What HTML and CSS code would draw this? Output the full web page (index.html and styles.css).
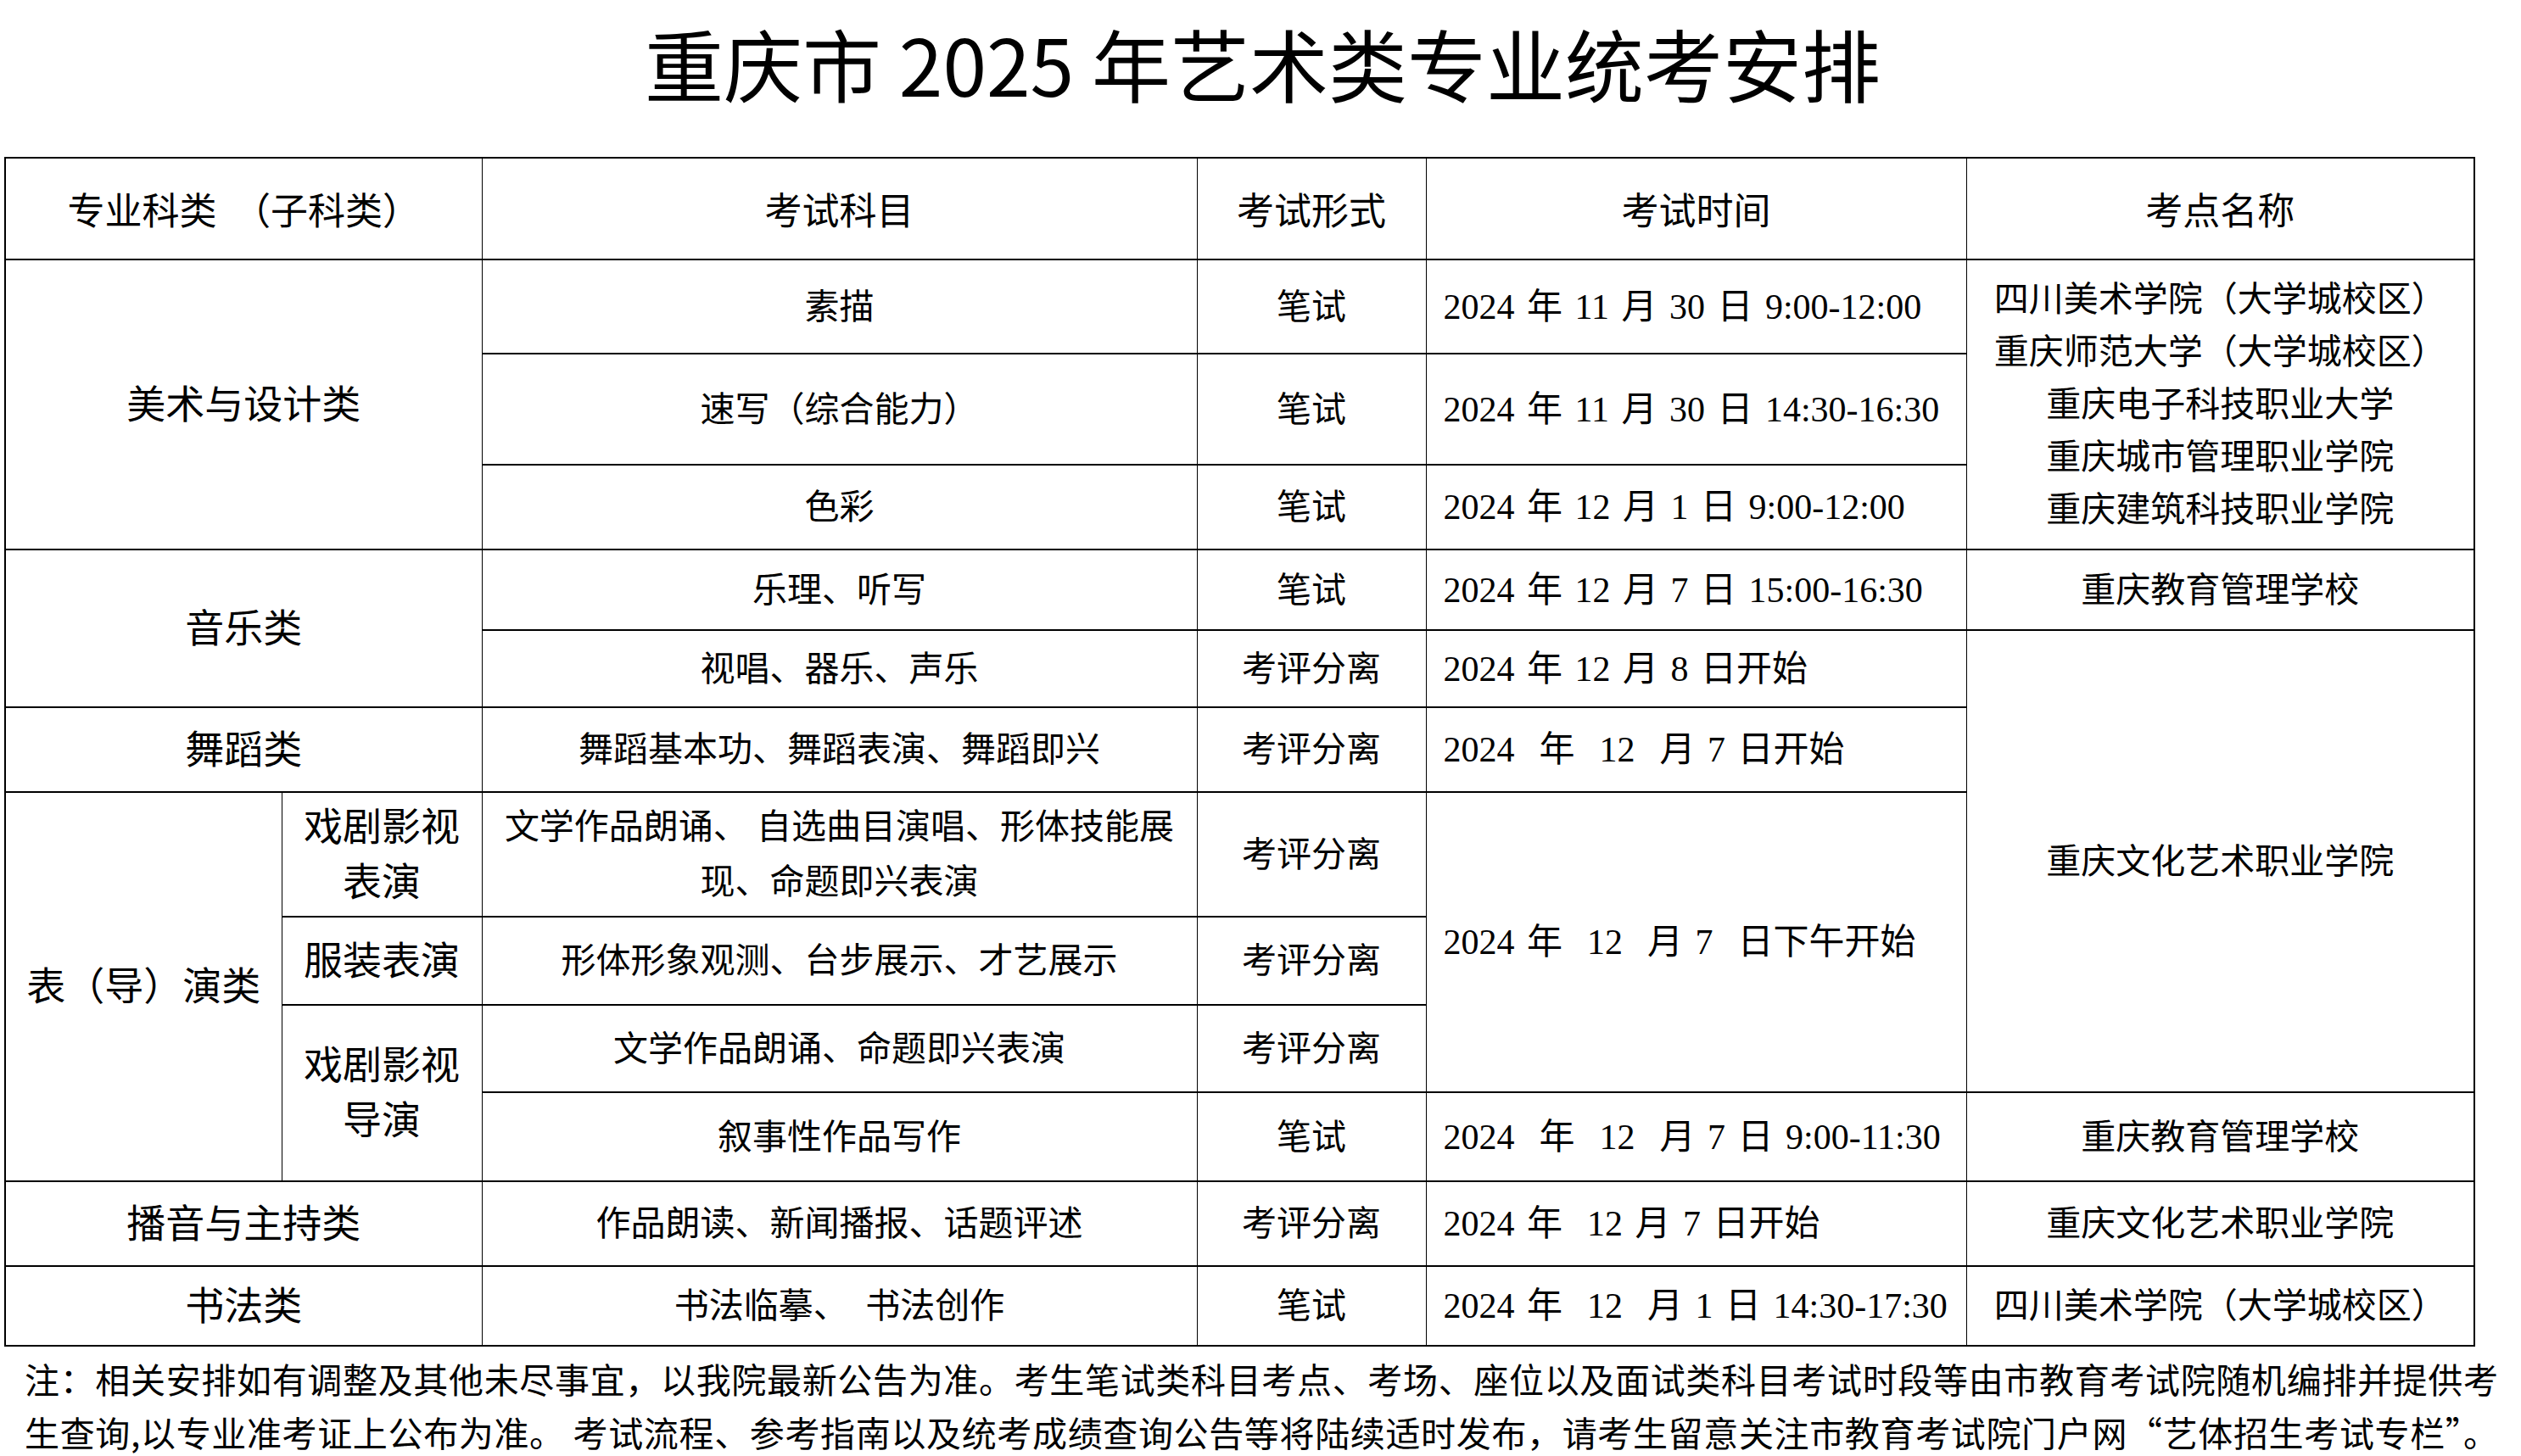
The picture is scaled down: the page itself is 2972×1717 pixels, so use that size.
FILE: index.html
```html
<!DOCTYPE html>
<html lang="zh-CN">
<head>
<meta charset="utf-8">
<title>重庆市 2025 年艺术类专业统考安排</title>
<link rel="stylesheet" href="styles.css">
</head>
<body>
<div class="page">
  <h1 class="title">重庆市 2025 年艺术类专业统考安排</h1>
  <table class="schedule">
    <colgroup>
      <col class="c-a"><col class="c-b"><col class="c-c"><col class="c-d"><col class="c-e"><col class="c-f">
    </colgroup>
    <thead>
      <tr class="row-head">
        <th colspan="2">专业科类 &nbsp;（子科类）</th>
        <th>考试科目</th>
        <th>考试形式</th>
        <th>考试时间</th>
        <th>考点名称</th>
      </tr>
    </thead>
    <tbody>
      <tr class="r1">
        <td colspan="2" rowspan="3" class="cat">美术与设计类</td>
        <td>素描</td>
        <td>笔试</td>
        <td class="time">2024 年 11 月 30 日 9:00-12:00</td>
        <td rowspan="3" class="site">四川美术学院（大学城校区）<br>重庆师范大学（大学城校区）<br>重庆电子科技职业大学<br>重庆城市管理职业学院<br>重庆建筑科技职业学院</td>
      </tr>
      <tr class="r2">
        <td>速写（综合能力）</td>
        <td>笔试</td>
        <td class="time">2024 年 11 月 30 日 14:30-16:30</td>
      </tr>
      <tr class="r3">
        <td>色彩</td>
        <td>笔试</td>
        <td class="time">2024 年 12 月 1 日 9:00-12:00</td>
      </tr>
      <tr class="r4">
        <td colspan="2" rowspan="2" class="cat">音乐类</td>
        <td>乐理、听写</td>
        <td>笔试</td>
        <td class="time">2024 年 12 月 7 日 15:00-16:30</td>
        <td class="site">重庆教育管理学校</td>
      </tr>
      <tr class="r5">
        <td>视唱、器乐、声乐</td>
        <td>考评分离</td>
        <td class="time">2024 年 12 月 8 日开始</td>
        <td rowspan="5" class="site">重庆文化艺术职业学院</td>
      </tr>
      <tr class="r6">
        <td colspan="2" class="cat">舞蹈类</td>
        <td>舞蹈基本功、舞蹈表演、舞蹈即兴</td>
        <td>考评分离</td>
        <td class="time">2024&nbsp; 年&nbsp; 12&nbsp; 月 7 日开始</td>
      </tr>
      <tr class="r7">
        <td rowspan="4" class="cat">表（导）演类</td>
        <td class="cat sub">戏剧影视<br>表演</td>
        <td class="wrap">文学作品朗诵、 自选曲目演唱、形体技能展<br>现、命题即兴表演</td>
        <td>考评分离</td>
        <td rowspan="3" class="time">2024 年&nbsp; 12&nbsp; 月 7&nbsp; 日下午开始</td>
      </tr>
      <tr class="r8">
        <td class="cat sub">服装表演</td>
        <td>形体形象观测、台步展示、才艺展示</td>
        <td>考评分离</td>
      </tr>
      <tr class="r9">
        <td rowspan="2" class="cat sub">戏剧影视<br>导演</td>
        <td>文学作品朗诵、命题即兴表演</td>
        <td>考评分离</td>
      </tr>
      <tr class="r10">
        <td>叙事性作品写作</td>
        <td>笔试</td>
        <td class="time">2024&nbsp; 年&nbsp; 12&nbsp; 月 7 日 9:00-11:30</td>
        <td class="site">重庆教育管理学校</td>
      </tr>
      <tr class="r11">
        <td colspan="2" class="cat">播音与主持类</td>
        <td>作品朗读、新闻播报、话题评述</td>
        <td>考评分离</td>
        <td class="time">2024 年&nbsp; 12 月 7 日开始</td>
        <td class="site">重庆文化艺术职业学院</td>
      </tr>
      <tr class="r12">
        <td colspan="2" class="cat">书法类</td>
        <td>书法临摹、&nbsp; 书法创作</td>
        <td>笔试</td>
        <td class="time">2024 年&nbsp; 12&nbsp; 月 1 日 14:30-17:30</td>
        <td class="site">四川美术学院（大学城校区）</td>
      </tr>
    </tbody>
  </table>
  <p class="note">
    <span class="note-line">注：相关安排如有调整及其他未尽事宜，以我院最新公告为准。考生笔试类科目考点、考场、座位以及面试类科目考试时段等由市教育考试院随机编排并提供考</span>
    <span class="note-line">生查询,以专业准考证上公布为准。 考试流程、参考指南以及统考成绩查询公告等将陆续适时发布，请考生留意关注市教育考试院门户网“艺体招生考试专栏”。</span>
  </p>
</div>
</body>
</html>
```

FILE: styles.css
```css
html, body {
  margin: 0;
  padding: 0;
  background: #ffffff;
  color: #000000;
}

.page {
  width: 2972px;
  padding-left: 5px;
  box-sizing: border-box;
}

.title {
  margin: 0;
  height: 185px;
  box-sizing: border-box;
  padding-top: 27px;
  font-family: "Noto Sans CJK SC", sans-serif;
  font-size: 93px;
  line-height: 94px;
  font-weight: 400;
  text-align: center;
}

.schedule {
  border-collapse: collapse;
  table-layout: fixed;
  width: 2912px;
  border: 2px solid #000;
}

.c-a { width: 326px; }
.c-b { width: 236px; }
.c-c { width: 843px; }
.c-d { width: 270px; }
.c-e { width: 637px; }
.c-f { width: 599px; }

.schedule th,
.schedule td {
  border-top: 2px solid #000;
  border-bottom: 2px solid #000;
  border-left: 1px solid #000;
  border-right: 1px solid #000;
  padding: 0 4px;
  text-align: center;
  vertical-align: middle;
  font-family: "Liberation Serif", "Noto Sans CJK SC", serif;
  font-size: 41px;
  line-height: 62px;
  font-weight: 400;
  white-space: nowrap;
}

.schedule th {
  font-family: "Noto Sans CJK SC", sans-serif;
  font-size: 44px;
  font-weight: 400;
}

.row-head { height: 120px; }
.r1 { height: 111px; }
.r2 { height: 131px; }
.r3 { height: 100px; }
.r4 { height: 95px; }
.r5 { height: 91px; }
.r6 { height: 100px; }
.r7 { height: 147px; }
.r8 { height: 104px; }
.r9 { height: 103px; }
.r10 { height: 105px; }
.r11 { height: 100px; }
.r12 { height: 94px; }

.schedule td.cat {
  font-size: 46px;
  line-height: 65px;
}

.schedule td.sub {
  padding: 0 2px;
}

.schedule td.wrap {
  line-height: 65px;
}

.schedule td.time {
  text-align: left;
  padding-left: 20px;
  font-size: 42px;
  word-spacing: 4px;
}

.schedule td.site {
  line-height: 62px;
}

.note {
  margin: 6px 0 0 24px;
  width: 2916px;
  font-family: "Noto Sans CJK SC", sans-serif;
  font-size: 41px;
  line-height: 63px;
}

.note-line {
  display: block;
  text-align: justify;
  text-align-last: justify;
  white-space: nowrap;
}
```
